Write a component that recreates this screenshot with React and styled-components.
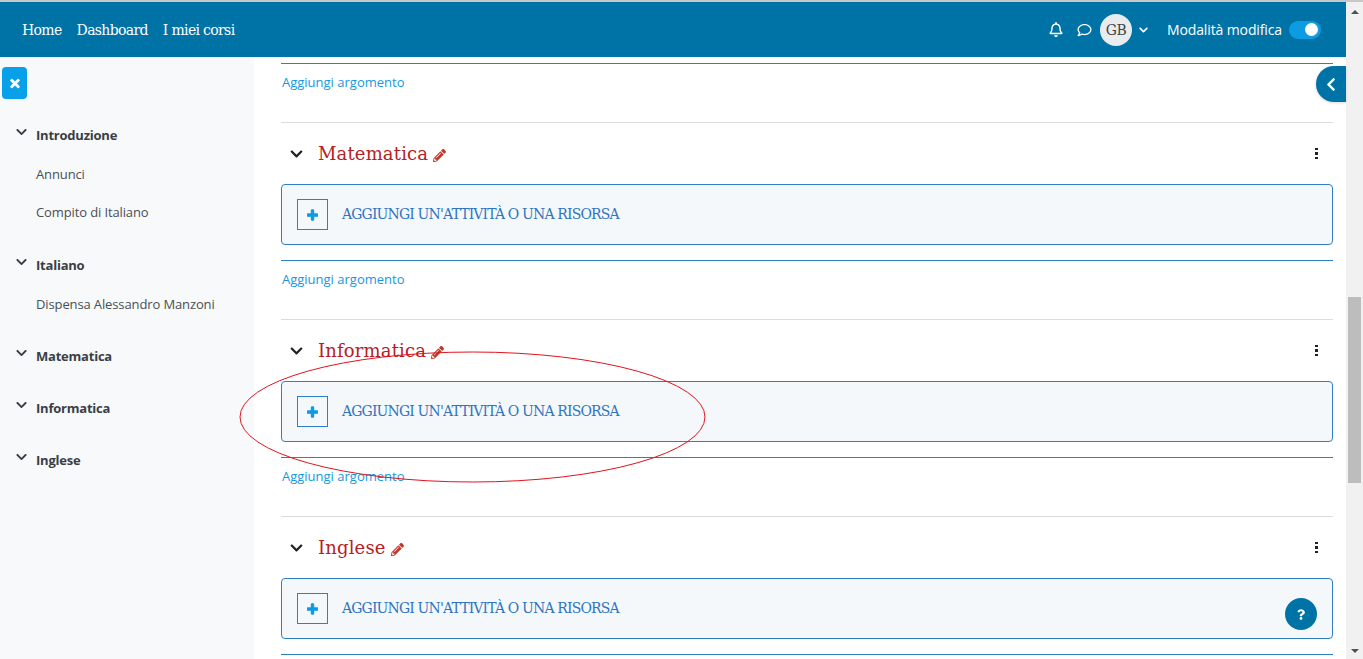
import React from 'react';
import styled, { createGlobalStyle } from 'styled-components';
import { FaPencilAlt, FaTimes, FaChevronDown, FaChevronLeft, FaQuestion, FaPlus, FaRegBell, FaRegComment } from 'react-icons/fa';

const Global = createGlobalStyle`
  html, body { margin: 0; padding: 0; height: 100%; overflow: hidden; background: #fff; }
  * { box-sizing: border-box; }
  #root { height: 100%; }
`;
const sans = `"Open Sans", "Noto Sans", sans-serif`;
const slab = `"DejaVu Serif", "Liberation Serif", serif`;

const Page = styled.div`
  position: relative; width: 1363px; height: 659px; overflow: hidden;
  display: flex; flex-direction: column; border-top: 2px solid #c8c8c8;
`;
const Frame = styled.div`display: flex; flex: 1; min-height: 0;`;
const Viewport = styled.div`flex: 1; min-width: 0; display: flex; flex-direction: column; position: relative;`;
const Header = styled.header`
  height: 55px; flex: none; background: #0073a6; color: #fff; display: flex; align-items: center;
  padding: 0 25px 0 22px;
`;
const Nav = styled.nav`display: flex; gap: 15px; font: 14px ${slab}; letter-spacing: -0.66px;`;
const Tools = styled.div`margin-left: auto; display: flex; align-items: center;`;
const BellIcon = styled(FaRegBell)`width: 14px; height: 15px; margin-right: 14px; color: #fff;`;
const CommentIcon = styled(FaRegComment)`width: 15px; height: 14px; margin-right: 8px; color: #fff;`;
const Avatar = styled.div`
  width: 32px; height: 32px; border-radius: 50%; background: #e9ecef; color: #444;
  font: 14px ${slab}; letter-spacing: -0.6px; display: flex; align-items: center; justify-content: center;
`;
const Caret = styled(FaChevronDown)`width: 9px; height: 10px; margin: 0 19px 0 7px; color: #fff;`;
const ModeLabel = styled.span`font: 14px ${sans}; letter-spacing: -0.12px; margin-right: 7px;`;
const Toggle = styled.div`
  width: 32px; height: 18px; border-radius: 9px; background: #0d9be3; display: flex; align-items: center;
  justify-content: flex-end; padding-right: 3px;
  &::after { content: ''; width: 13px; height: 13px; border-radius: 50%; background: #fff; }
`;
const Body = styled.div`flex: 1; display: flex; min-height: 0;`;
const Sidebar = styled.aside`
  width: 254px; flex: none; background: #f8f9fb; padding: 10px 0 0 2px; color: #4a4f55; font: 13px ${sans}; letter-spacing: -0.12px;
`;
const CloseBtn = styled.div`
  width: 25px; height: 32px; border-radius: 4px; background: #08a0e9; display: flex; align-items: center; justify-content: center;
  margin-bottom: 26px; color: #fff;
`;
const CloseIcon = styled(FaTimes)`width: 10px; height: 13px; stroke: currentColor; stroke-width: 30;`;
const Group = styled.div`margin-bottom: ${p => p.$mb}px;`;
const GroupHead = styled.div`
  display: flex; align-items: center; height: 20px; padding-left: 14px; font-weight: 700; color: #3a3f45; letter-spacing: -0.22px;
`;
const SideCaret = styled(FaChevronDown)`width: 11px; height: 12px; margin: -6px 9px 0 0; color: #3a3f45;`;
const Item = styled.div`height: 38px; padding: 20px 0 0 34px; line-height: 18px; white-space: nowrap;
  &:first-of-type { height: 39px; padding-top: 21px; }
`;
const Main = styled.main`flex: 1; min-width: 0; overflow: hidden; padding: 6px 13px 0 27px;`;
const BlueRule = styled.div`height: 1px; background: #2f7fc4;`;
const GreyRule = styled.div`height: 1px; background: #dcdcdc;`;
const AddTopic = styled.a`
  display: block; height: 58px; padding-top: 10px; padding-left: 1px; font: 13px/17px ${sans}; color: #1797e0;
`;
const SectionHead = styled.div`display: flex; align-items: center; height: 61px; padding-left: 9px;`;
const Chevron = styled(FaChevronDown)`width: 13px; height: 14px; margin-right: 15px; color: #1d2125;`;
const Title = styled.h3`margin: 0; font: 400 18px ${slab}; color: #b8201f; letter-spacing: 0.15px;`;
const Pencil = styled(FaPencilAlt)`width: 13px; height: 13px; margin-left: 5px; margin-top: 3px; color: #c0392b;`;
const Kebab = styled.div`
  margin-left: auto; margin-right: 15px; display: flex; flex-direction: column; gap: 2px;
  & > i { width: 3px; height: 2.5px; background: #222; display: block; }
`;
const ActivityBox = styled.div`
  height: 61px; border: 1px solid #2f7fc4; border-radius: 4px; background: #f4f8fb;
  display: flex; align-items: center; padding-left: 15px; margin-bottom: 15px;
`;
const PlusBox = styled.div`
  width: 31px; height: 31px; border: 1px solid #2f7fc4; display: flex; align-items: center; justify-content: center; margin-right: 14px; color: #0d9be3;
`;
const PlusIcon = styled(FaPlus)`width: 11px; height: 12px; stroke: currentColor; stroke-width: 50;`;
const ActivityLabel = styled.span`font: 14px ${slab}; color: #2f74c0; letter-spacing: -0.85px; white-space: nowrap; padding-bottom: 2px;`;
const Collapse = styled.div`
  position: absolute; right: 0; top: 64px; width: 30px; height: 36px; background: #0073a6; color: #fff;
  border-radius: 18px 0 0 18px; display: flex; align-items: center; justify-content: center;
  box-shadow: 0 1px 3px rgba(0,0,0,.15);
`;
const BackIcon = styled(FaChevronLeft)`width: 12px; height: 15px;`;
const Help = styled.div`
  position: absolute; left: 1285px; top: 596px; width: 32px; height: 32px; border-radius: 50%; background: #0073a6;
  color: #fff; display: flex; align-items: center; justify-content: center;
`;
const HelpIcon = styled(FaQuestion)`width: 8px; height: 11px;`;
const Ellipse = styled.svg`position: absolute; left: 239px; top: 349px; width: 468px; height: 133px; pointer-events: none; overflow: visible;`;
const ScrollBar = styled.div`
  width: 17px; flex: none; background: #f1f1f1; display: flex; flex-direction: column; align-items: center; padding-top: 8px;
`;
const ArrowUp = styled.div`width: 0; height: 0; border: 4px solid transparent; border-top: 0; border-bottom: 4px solid #505050;`;
const ArrowDown = styled.div`margin-top: auto; margin-bottom: 6px; width: 0; height: 0; border: 4px solid transparent; border-bottom: 0; border-top: 4px solid #505050;`;
const Thumb = styled.div`width: 13px; height: 186px; background: #bdbdbd; margin-top: 283px;`;

const Section = ({ name, last }) => (
  <>
    <SectionHead>
      <Chevron />
      <Title>{name}</Title>
      <Pencil />
      <Kebab><i /><i /><i /></Kebab>
    </SectionHead>
    <ActivityBox>
      <PlusBox><PlusIcon /></PlusBox>
      <ActivityLabel>AGGIUNGI UN'ATTIVITÀ O UNA RISORSA</ActivityLabel>
    </ActivityBox>
    <BlueRule />
    {!last && (
      <>
        <AddTopic>Aggiungi argomento</AddTopic>
        <GreyRule />
      </>
    )}
  </>
);

export default function App() {
  return (
    <Page>
      <Global />
      <Frame>
        <Viewport>
          <Header>
            <Nav><span>Home</span><span>Dashboard</span><span>I miei corsi</span></Nav>
            <Tools>
              <BellIcon />
              <CommentIcon />
              <Avatar>GB</Avatar>
              <Caret />
              <ModeLabel>Modalità modifica</ModeLabel>
              <Toggle />
            </Tools>
          </Header>
          <Body>
            <Sidebar>
              <CloseBtn><CloseIcon /></CloseBtn>
              <Group $mb={34}>
                <GroupHead><SideCaret />Introduzione</GroupHead>
                <Item>Annunci</Item>
                <Item>Compito di Italiano</Item>
              </Group>
              <Group $mb={33}>
                <GroupHead><SideCaret />Italiano</GroupHead>
                <Item>Dispensa Alessandro Manzoni</Item>
              </Group>
              <Group $mb={32}><GroupHead><SideCaret />Matematica</GroupHead></Group>
              <Group $mb={32}><GroupHead><SideCaret />Informatica</GroupHead></Group>
              <Group $mb={32}><GroupHead><SideCaret />Inglese</GroupHead></Group>
            </Sidebar>
            <Main>
              <BlueRule />
              <AddTopic>Aggiungi argomento</AddTopic>
              <GreyRule />
              <Section name="Matematica" />
              <Section name="Informatica" />
              <Section name="Inglese" last />
            </Main>
          </Body>
          <Collapse><BackIcon /></Collapse>
        </Viewport>
        <ScrollBar><ArrowUp /><Thumb /><ArrowDown /></ScrollBar>
      </Frame>
      <Help><HelpIcon /></Help>
      <Ellipse viewBox="0 0 468 133"><ellipse cx="233.500" cy="66" rx="232.500" ry="65" fill="none" stroke="#e0141e" strokeWidth="1" /></Ellipse>
    </Page>
  );
}
